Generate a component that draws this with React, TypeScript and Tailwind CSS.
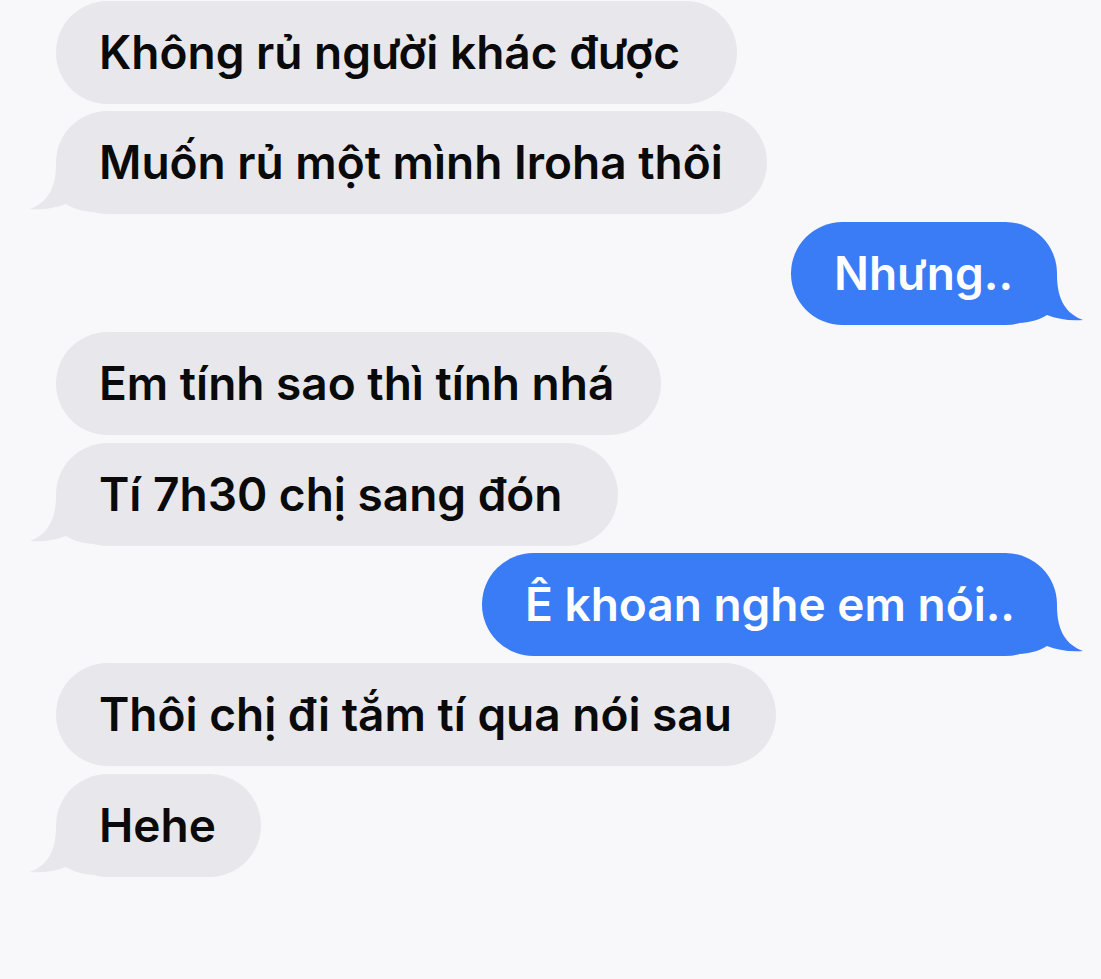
import React from "react";

type Msg = { text: string; mine: boolean; tail: boolean; w: string };

const messages: Msg[] = [
  { text: "Không rủ người khác được", mine: false, tail: false, w: "w-[681px]" },
  { text: "Muốn rủ một mình Iroha thôi", mine: false, tail: true, w: "w-[711px]" },
  { text: "Nhưng..", mine: true, tail: true, w: "w-[266px]" },
  { text: "Em tính sao thì tính nhá", mine: false, tail: false, w: "w-[605px]" },
  { text: "Tí 7h30 chị sang đón", mine: false, tail: true, w: "w-[562px]" },
  { text: "Ê khoan nghe em nói..", mine: true, tail: true, w: "w-[575px]" },
  { text: "Thôi chị đi tắm tí qua nói sau", mine: false, tail: false, w: "w-[720px]" },
  { text: "Hehe", mine: false, tail: true, w: "w-[205px]" },
];

function Tail({ mine }: { mine: boolean }) {
  // đuôi bong bóng kiểu iMessage
  return (
    <svg
      className={
        mine
          ? "absolute bottom-0 right-[-26px] h-[50px] w-[80px] -scale-x-100"
          : "absolute bottom-0 left-[-26px] h-[50px] w-[80px]"
      }
      viewBox="0 0 80 50"
      fill="currentColor"
    >
      <path d="M26 0 C26 26 16 39 0 45 C14 46 26 44 36 40 C44 45 52 47 62 48 L77 0 Z" />
    </svg>
  );
}

export default function App() {
  return (
    <div
      className="min-h-screen w-full bg-[#f8f8fa] pt-px"
      style={{ fontFamily: "Inter, 'Noto Sans', sans-serif" }}
    >
      <div className="flex flex-col gap-[7.4px]">
        {messages.map((m, i) => (
          <div
            key={i}
            className={m.mine ? "flex justify-end pr-[44px]" : "flex justify-start pl-[56px]"}
          >
            <div
              className={
                (m.mine
                  ? "bg-[#3a7cf5] text-[#3a7cf5] "
                  : "bg-[#e8e7ec] text-[#e8e7ec] ") +
                "relative flex h-[103px] items-center rounded-full pl-[43px] " +
                m.w
              }
            >
              {m.tail && <Tail mine={m.mine} />}
              <span
                className={
                  (m.mine ? "text-white " : "text-[#0a0a0a] ") +
                  "relative whitespace-nowrap text-[46px] font-semibold tracking-[0px]"
                }
              >
                {m.text}
              </span>
            </div>
          </div>
        ))}
      </div>
    </div>
  );
}
